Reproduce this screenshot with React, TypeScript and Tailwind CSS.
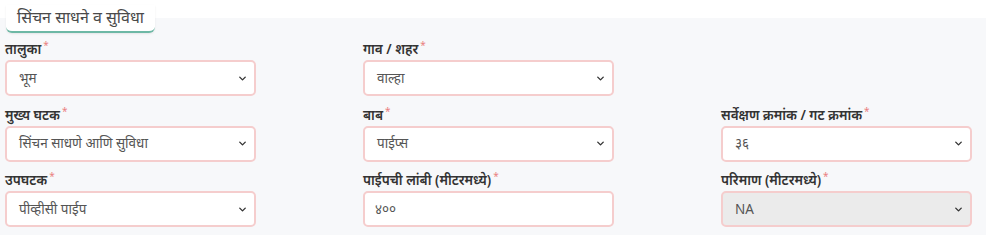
import { ChevronDown } from 'lucide-react';

type Field = {
  label: string;
  value: string;
  kind: 'select' | 'input' | 'disabled';
};

const rows: (Field | null)[][] = [
  [
    { label: 'तालुका', value: 'भूम', kind: 'select' },
    { label: 'गाव / शहर', value: 'वाल्हा', kind: 'select' },
    null,
  ],
  [
    { label: 'मुख्य घटक', value: 'सिंचन साधणे आणि सुविधा', kind: 'select' },
    { label: 'बाब', value: 'पाईप्स', kind: 'select' },
    { label: 'सर्वेक्षण क्रमांक / गट क्रमांक', value: '३६', kind: 'select' },
  ],
  [
    { label: 'उपघटक', value: 'पीव्हीसी पाईप', kind: 'select' },
    { label: 'पाईपची लांबी (मीटरमध्ये)', value: '४००', kind: 'input' },
    { label: 'परिमाण (मीटरमध्ये)', value: 'NA', kind: 'disabled' },
  ],
];

function FormField({ field }: { field: Field }) {
  const isInput = field.kind === 'input';
  const isDisabled = field.kind === 'disabled';
  return (
    <div className="flex flex-col">
      <label className="h-[18px] text-[13.5px] leading-[18px] font-semibold text-[#333]">
        {field.label}
        <sup className="ml-[2px] text-[10px] font-normal text-[#ea8080]">*</sup>
      </label>
      <div
        className={`mt-[2px] flex h-[36px] items-center justify-between rounded-[5px] border-2 border-[#f5cdcd] ${
          isDisabled ? 'bg-[#ebebeb]' : 'bg-white'
        } ${isInput ? 'pl-[10px]' : 'pl-[12px]'} pr-[6px]`}
      >
        <span className="text-[13.5px] text-[#555]">{field.value}</span>
        {!isInput && <ChevronDown className="h-[11px] w-[11px] text-[#333]" strokeWidth={3} />}
      </div>
    </div>
  );
}

export default function App() {
  return (
    <div
      className="min-h-[235px] w-[986px] bg-[linear-gradient(to_bottom,#ffffff_18px,#f7f8fa_18px)] pl-[5px] pt-[5px]"
      style={{ fontFamily: '"Noto Sans", "Noto Sans Devanagari", "Lohit Devanagari", sans-serif' }}
    >
      {/* Section tab */}
      <div className="ml-[1px] inline-block rounded-b-[6px] border-b-2 border-[#6db8a5] bg-white px-[11px] pb-[2px] text-[16px] leading-[24px] text-[#4a4a4a] shadow-[0_1px_2px_rgba(0,0,0,0.08)]">
        सिंचन साधने व सुविधा
      </div>

      <div className="mt-[7px] grid grid-cols-[251px_251px_251px] gap-x-[107px] gap-y-[9.5px]">
        {rows.flat().map((f, i) => (f ? <FormField key={i} field={f} /> : <div key={i} />))}
      </div>
    </div>
  );
}
